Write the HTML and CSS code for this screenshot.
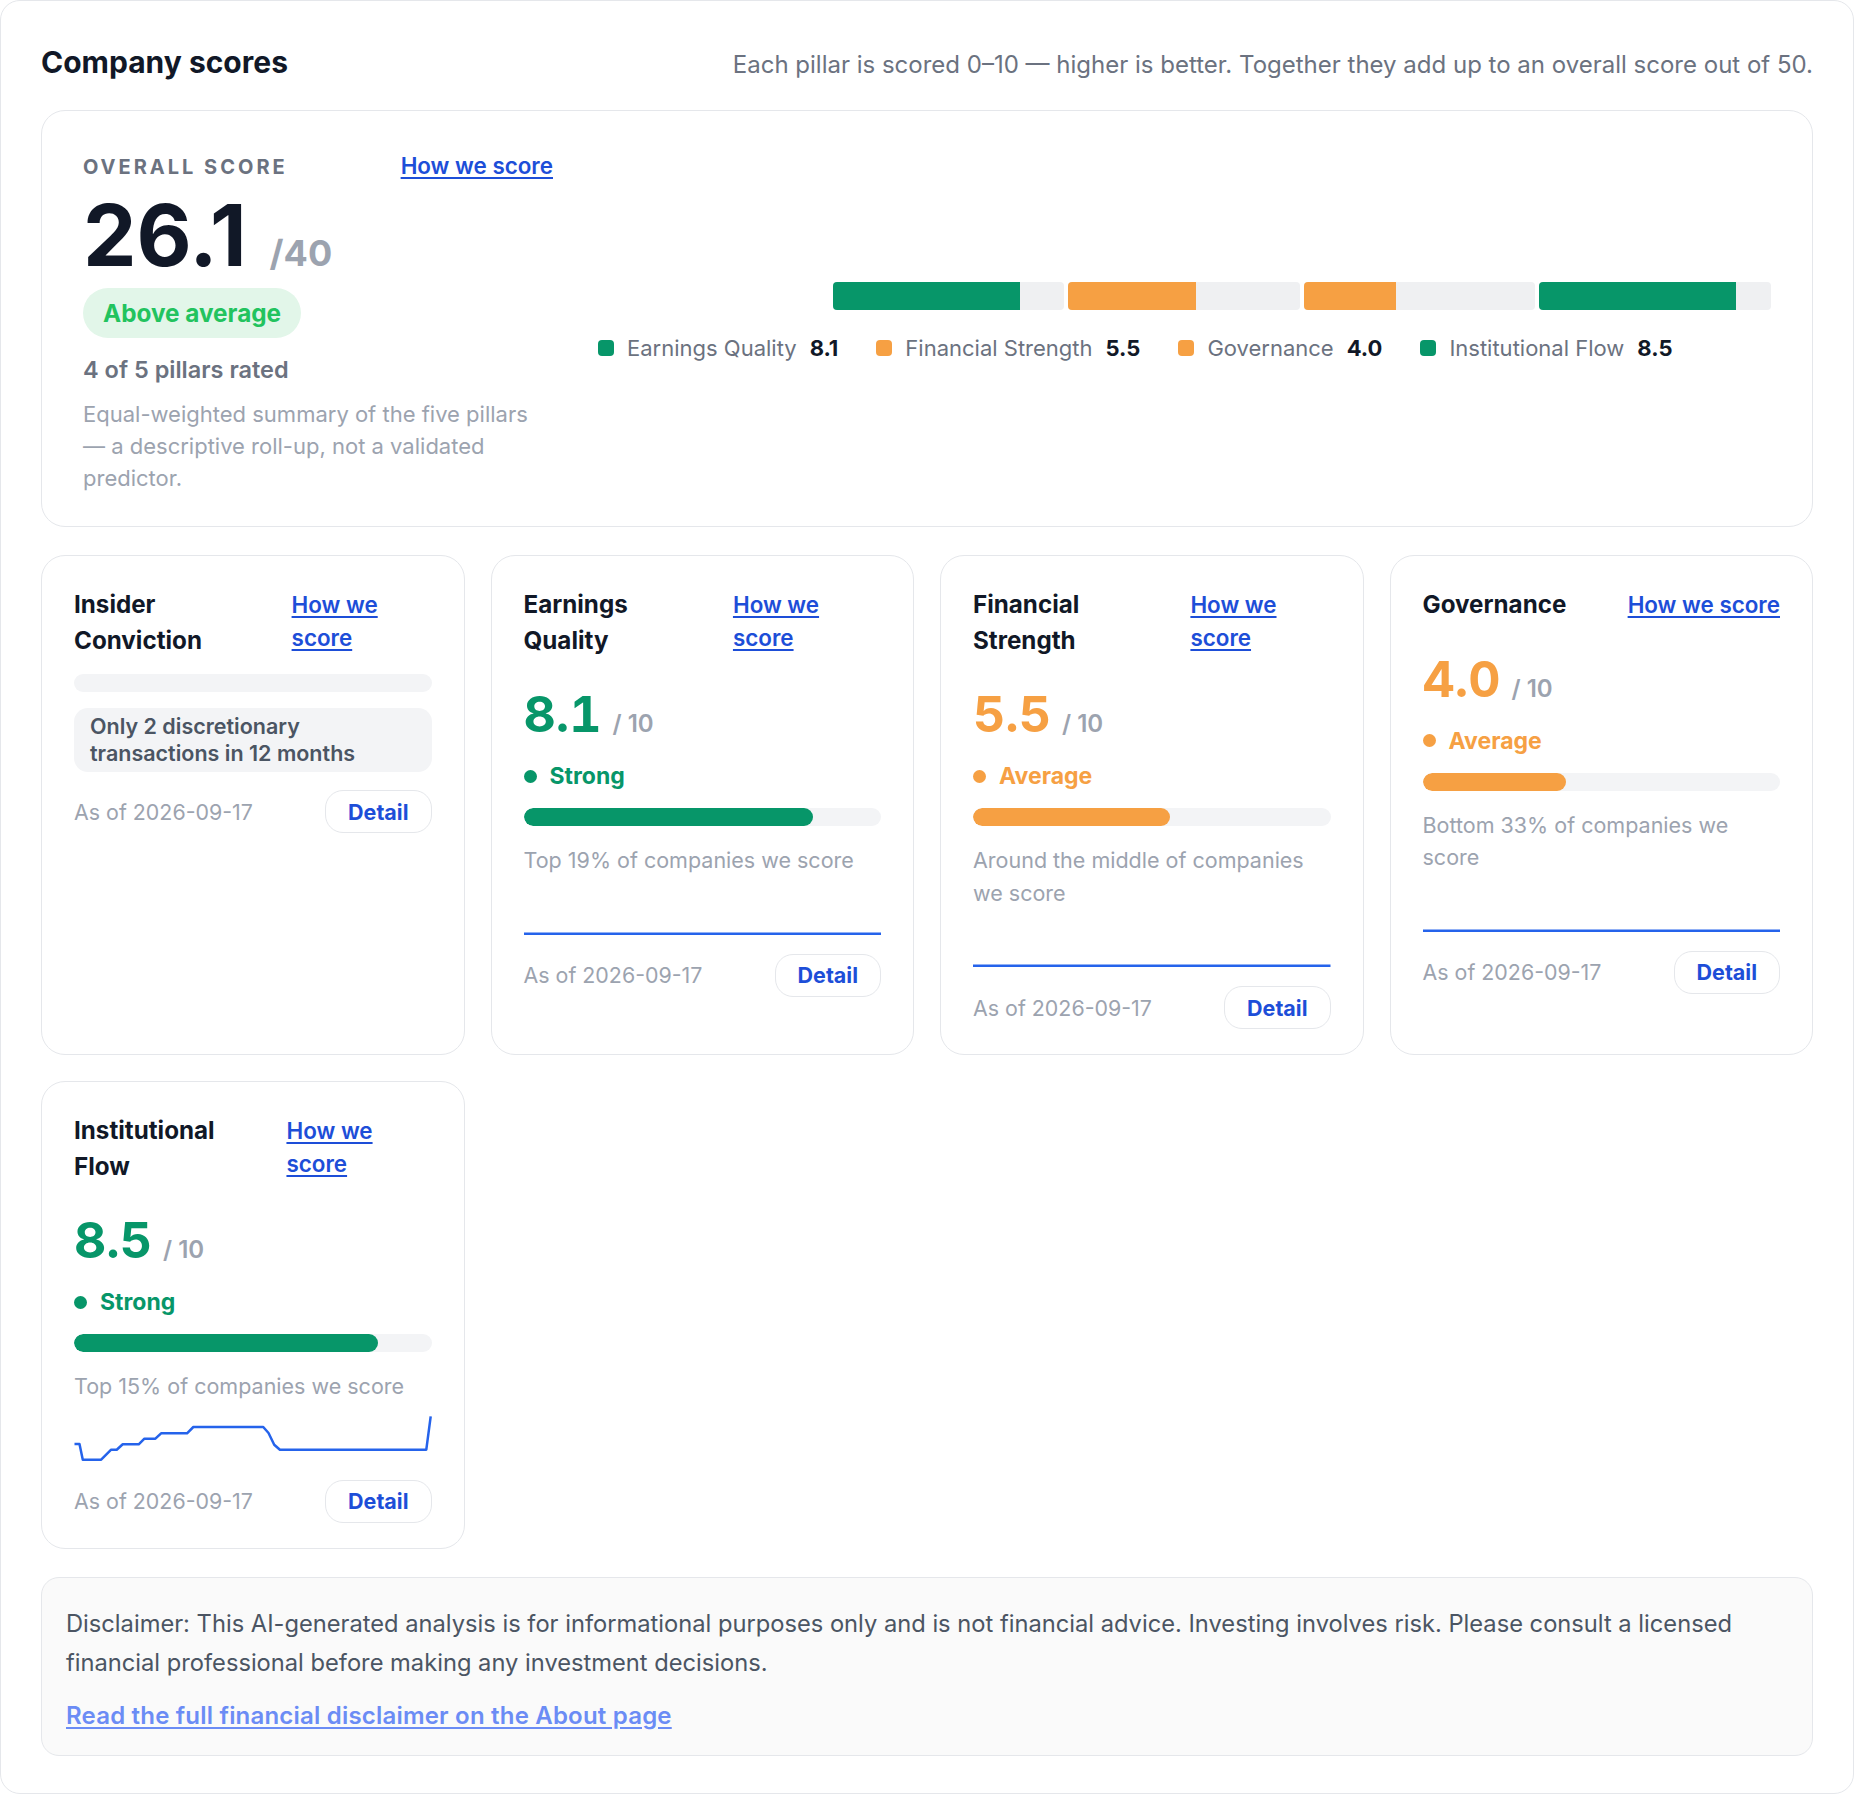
FILE: index.html
```html
<!DOCTYPE html>
<html lang="en">
<head>
    <meta charset="UTF-8">
    <meta name="viewport" content="width=device-width, initial-scale=1.0">
    <title>Company scores</title>
    <link rel="stylesheet" href="styles.css">
</head>
<body>
    <div class="frame">
        <header class="top">
            <h1>Company scores</h1>
            <p class="sub">Each pillar is scored 0–10 — higher is better. Together they add up to an overall score out of 50.</p>
        </header>

        <section class="overall">
            <div class="overall-main">
                <div class="overall-head">
                    <span class="eyebrow">Overall score</span>
                    <a href="#" class="how">How we score</a>
                </div>
                <div class="big">
                    <span class="big-num">26.1</span>
                    <span class="big-max">/40</span>
                </div>
                <span class="pill">Above average</span>
                <p class="rated">4 of 5 pillars rated</p>
                <p class="summary">Equal-weighted summary of the five pillars — a descriptive roll-up, not a validated predictor.</p>
            </div>
            <div class="overall-side">
                <div class="stack">
                    <div class="seg"><div class="seg-fill green" style="width: 81%"></div></div>
                    <div class="seg"><div class="seg-fill orange" style="width: 55%"></div></div>
                    <div class="seg"><div class="seg-fill orange" style="width: 40%"></div></div>
                    <div class="seg"><div class="seg-fill green" style="width: 85%"></div></div>
                </div>
                <ul class="legend">
                    <li><span class="swatch green"></span><span>Earnings Quality</span><b>8.1</b></li>
                    <li><span class="swatch orange"></span><span>Financial Strength</span><b>5.5</b></li>
                    <li><span class="swatch orange"></span><span>Governance</span><b>4.0</b></li>
                    <li><span class="swatch green"></span><span>Institutional Flow</span><b>8.5</b></li>
                </ul>
            </div>
        </section>

        <section class="pillars">
            <div class="card">
                <div class="card-head">
                    <span class="card-title">Insider Conviction</span>
                    <a href="#" class="how">How we score</a>
                </div>
                <div class="bar"></div>
                <p class="note-box">Only 2 discretionary transactions in 12 months</p>
                <div class="card-foot">
                    <span class="asof">As of 2026-09-17</span>
                    <button class="detail">Detail</button>
                </div>
            </div>

            <div class="card">
                <div class="card-head">
                    <span class="card-title">Earnings Quality</span>
                    <a href="#" class="how">How we score</a>
                </div>
                <div class="score strong">
                    <span class="score-num">8.1</span>
                    <span class="score-max">/ 10</span>
                </div>
                <div class="tier strong">Strong</div>
                <div class="bar"><div class="bar-fill green" style="width: 81%"></div></div>
                <p class="desc">Top 19% of companies we score</p>
                <svg class="spark" viewBox="0 0 358 48" preserveAspectRatio="none">
                    <path d="M0 45.7 L358 45.7"/>
                </svg>
                <div class="card-foot">
                    <span class="asof">As of 2026-09-17</span>
                    <button class="detail">Detail</button>
                </div>
            </div>

            <div class="card">
                <div class="card-head">
                    <span class="card-title">Financial Strength</span>
                    <a href="#" class="how">How we score</a>
                </div>
                <div class="score average">
                    <span class="score-num">5.5</span>
                    <span class="score-max">/ 10</span>
                </div>
                <div class="tier average">Average</div>
                <div class="bar"><div class="bar-fill orange" style="width: 55%"></div></div>
                <p class="desc">Around the middle of companies we score</p>
                <svg class="spark" viewBox="0 0 358 48" preserveAspectRatio="none">
                    <path d="M0 45.7 L358 45.7"/>
                </svg>
                <div class="card-foot">
                    <span class="asof">As of 2026-09-17</span>
                    <button class="detail">Detail</button>
                </div>
            </div>

            <div class="card">
                <div class="card-head">
                    <span class="card-title">Governance</span>
                    <a href="#" class="how">How we score</a>
                </div>
                <div class="score average">
                    <span class="score-num">4.0</span>
                    <span class="score-max">/ 10</span>
                </div>
                <div class="tier average">Average</div>
                <div class="bar"><div class="bar-fill orange" style="width: 40%"></div></div>
                <p class="desc">Bottom 33% of companies we score</p>
                <svg class="spark" viewBox="0 0 358 48" preserveAspectRatio="none">
                    <path d="M0 45.7 L358 45.7"/>
                </svg>
                <div class="card-foot">
                    <span class="asof">As of 2026-09-17</span>
                    <button class="detail">Detail</button>
                </div>
            </div>

            <div class="card">
                <div class="card-head">
                    <span class="card-title">Institutional Flow</span>
                    <a href="#" class="how">How we score</a>
                </div>
                <div class="score strong">
                    <span class="score-num">8.5</span>
                    <span class="score-max">/ 10</span>
                </div>
                <div class="tier strong">Strong</div>
                <div class="bar"><div class="bar-fill green" style="width: 85%"></div></div>
                <p class="desc">Top 15% of companies we score</p>
                <svg class="spark" viewBox="0 0 358 48" preserveAspectRatio="none">
                    <path d="M0.5 30 L5.5 30 L8.8 45.7 L27.2 45.7 L37.2 35.7 L42.8 35.7 L48.8 30.3 L64.8 30.3 L70.5 24.7 L81.5 24.7 L87.2 19.3 L113.2 19.3 L119.5 13 L189.5 13 L194.8 19 L200.5 30.7 L206.2 35.7 L352.8 35.7 L357.2 2.3"/>
                </svg>
                <div class="card-foot">
                    <span class="asof">As of 2026-09-17</span>
                    <button class="detail">Detail</button>
                </div>
            </div>
        </section>

        <div class="disclaimer">
            <p>Disclaimer: This AI-generated analysis is for informational purposes only and is not financial advice. Investing involves risk. Please consult a licensed financial professional before making any investment decisions.</p>
            <a href="#">Read the full financial disclaimer on the About page</a>
        </div>
    </div>
</body>
</html>
```

FILE: styles.css
```css
body {
    margin: 0;
    font-family: Inter, 'Noto Sans', 'Liberation Sans', sans-serif;
    color: #111827;
    background-color: white;
}
.frame {
    box-sizing: border-box;
    min-height: 100vh;
    border: 1px solid #e5e7eb;
    border-radius: 20px;
    padding: 43px 40px 36px;
    display: flex;
    flex-direction: column;
    gap: 28px;
}
.top {
    display: flex;
    justify-content: space-between;
    align-items: baseline;
    padding-bottom: 2px;
}
h1 {
    margin: 0;
    font-size: 30px;
    font-weight: 700;
    line-height: 1.2;
}
.sub {
    margin: 0;
    font-size: 24px;
    color: #6b7280;
}
.how {
    color: #1d4ed8;
    font-weight: 600;
    font-size: 22.4px;
    text-underline-offset: 3px;
    text-decoration-thickness: 1.5px;
}

/* overall card */
.overall {
    border: 1px solid #e5e7eb;
    border-radius: 24px;
    padding: 40px 41px 32px;
    display: flex;
    align-items: center;
    gap: 45px;
}
.overall-main {
    width: 470px;
    flex: none;
    display: flex;
    flex-direction: column;
    align-items: flex-start;
}
.overall-head {
    align-self: stretch;
    display: flex;
    justify-content: space-between;
    align-items: baseline;
    line-height: 30px;
}
.eyebrow {
    font-size: 20px;
    font-weight: 700;
    letter-spacing: 3px;
    text-transform: uppercase;
    color: #6b7280;
}
.big {
    display: flex;
    align-items: baseline;
    gap: 23px;
    margin-top: 11px;
    line-height: 1;
}
.big-num {
    font-size: 85px;
    font-weight: 700;
}
.big-max {
    font-size: 36px;
    font-weight: 700;
    color: #9ca3af;
}
.pill {
    margin-top: 10px;
    padding: 0 20px;
    height: 50px;
    line-height: 50px;
    border-radius: 25px;
    background-color: #e2f6e9;
    color: #22c35e;
    font-size: 24.3px;
    font-weight: 700;
}
.rated {
    margin: 16px 0 0;
    font-size: 23.5px;
    font-weight: 600;
    line-height: 32px;
    color: #6b7280;
}
.summary {
    max-width: 460px;
    margin: 12px 0 0;
    font-size: 22px;
    line-height: 32px;
    color: #9ca3af;
}
.overall-side {
    flex: 1;
    display: flex;
    flex-direction: column;
    gap: 22px;
}
.stack {
    align-self: flex-end;
    width: 80%;
    height: 28px;
    display: flex;
    gap: 4px;
}
.seg {
    flex: 1;
    background-color: #eff0f2;
    border-radius: 4px;
    overflow: hidden;
}
.seg-fill {
    height: 100%;
}
.green { background-color: #079669; }
.orange { background-color: #f6a043; }
.legend {
    list-style: none;
    margin: 0;
    padding: 0;
    display: flex;
    flex-wrap: wrap;
    gap: 10px 38px;
    font-size: 22px;
    line-height: 32px;
    color: #6b7280;
}
.legend li {
    display: flex;
    align-items: center;
    gap: 13px;
}
.swatch {
    width: 16px;
    height: 16px;
    border-radius: 4px;
}
.legend b {
    color: #111827;
    font-weight: 700;
}

/* pillar cards */
.pillars {
    display: grid;
    grid-template-columns: repeat(4, 1fr);
    gap: 26px;
}
.card {
    border: 1px solid #e5e7eb;
    border-radius: 24px;
    padding: 31px 32px 25px;
    display: flex;
    flex-direction: column;
    gap: 16px;
}
.card-head {
    display: flex;
    justify-content: space-between;
    align-items: baseline;
    gap: 20px;
}
.card-title {
    font-size: 24.2px;
    font-weight: 700;
    line-height: 35.5px;
}
.card-head .how {
    line-height: 32.5px;
}
.score {
    display: flex;
    align-items: baseline;
    gap: 11px;
    margin-top: 10px;
}
.score-num {
    font-size: 50px;
    font-weight: 700;
    line-height: 60px;
    font-variant-numeric: tabular-nums;
}
.score-max {
    font-size: 24px;
    font-weight: 600;
    color: #9ca3af;
}
.strong { color: #079669; }
.average { color: #f6a043; }
.tier {
    display: flex;
    align-items: center;
    gap: 13px;
    font-size: 23px;
    font-weight: 700;
    line-height: 32px;
}
.tier::before {
    content: "";
    width: 13px;
    height: 13px;
    border-radius: 50%;
    background-color: currentColor;
}
.bar {
    height: 18px;
    border-radius: 9px;
    background-color: #f3f4f6;
    overflow: hidden;
}
.bar-fill {
    height: 100%;
    border-radius: 9px;
}
.desc {
    margin: 2px 0 0;
    font-size: 21.5px;
    line-height: 32.5px;
    color: #9ca3af;
}
.spark {
    display: block;
    width: 100%;
    height: 48px;
    margin-top: -5px;
}
.spark path {
    fill: none;
    stroke: #2563eb;
    stroke-width: 2.5px;
    stroke-linejoin: round;
    vector-effect: non-scaling-stroke;
}
.note-box {
    margin: 0;
    padding: 5px 16px;
    border-radius: 14px;
    background-color: #f3f4f6;
    font-size: 21.5px;
    font-weight: 600;
    line-height: 27px;
    color: #4b5563;
}
.card-foot {
    display: flex;
    justify-content: space-between;
    align-items: center;
    margin-top: 2px;
}
.asof {
    font-size: 21.4px;
    color: #9ca3af;
}
.detail {
    height: 43px;
    padding: 0 22px;
    border: 1px solid #e5e7eb;
    border-radius: 18px;
    background-color: white;
    color: #1d4ed8;
    font-family: inherit;
    font-size: 21.5px;
    font-weight: 700;
    cursor: pointer;
}

/* disclaimer */
.disclaimer {
    border: 1px solid #e5e7eb;
    border-radius: 18px;
    background-color: #fafafa;
    padding: 26px 24px 20px;
    font-size: 23.7px;
    line-height: 39px;
    color: #4b5563;
}
.disclaimer p {
    margin: 0 0 14px;
}
.disclaimer a {
    color: #6b8cf5;
    font-size: 24px;
    font-weight: 600;
    letter-spacing: 0.2px;
    text-underline-offset: 3px;
}
```
